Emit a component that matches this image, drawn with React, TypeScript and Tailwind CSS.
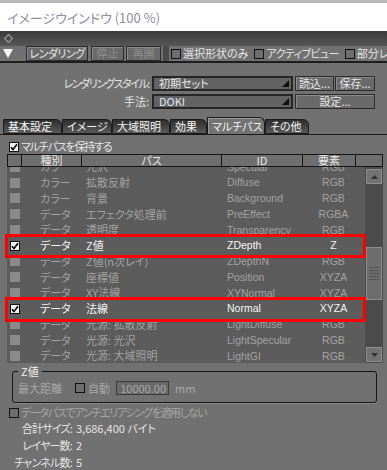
import React from 'react'

type Row = { kind: string; path: string; id: string; el: string; on?: boolean }

const rows: Row[] = [
  { kind: 'カラー', path: '光沢', id: 'Specular', el: 'RGB' },
  { kind: 'カラー', path: '拡散反射', id: 'Diffuse', el: 'RGB' },
  { kind: 'カラー', path: '背景', id: 'Background', el: 'RGB' },
  { kind: 'データ', path: 'エフェクタ処理前', id: 'PreEffect', el: 'RGBA' },
  { kind: 'データ', path: '透明度', id: 'Transparency', el: 'RGB' },
  { kind: 'データ', path: 'Z値', id: 'ZDepth', el: 'Z', on: true },
  { kind: 'データ', path: 'Z値(n次レイ)', id: 'ZDepthN', el: 'RGB' },
  { kind: 'データ', path: '座標値', id: 'Position', el: 'XYZA' },
  { kind: 'データ', path: 'XY法線', id: 'XYNormal', el: 'XYZA' },
  { kind: 'データ', path: '法線', id: 'Normal', el: 'XYZA', on: true },
  { kind: 'データ', path: '光源: 拡散反射', id: 'LightDiffuse', el: 'RGB' },
  { kind: 'データ', path: '光源: 光沢', id: 'LightSpecular', el: 'RGB' },
  { kind: 'データ', path: '光源: 大域照明', id: 'LightGI', el: 'RGB' },
]

const tabs = [
  { t: '基本設定', w: 'w-[59px]' },
  { t: 'イメージ', w: 'w-[50px]' },
  { t: '大域照明', w: 'w-[58px]' },
  { t: '効果', w: 'w-[37px]' },
  { t: 'マルチパス', w: 'w-[58px]', active: true },
  { t: 'その他', w: 'w-[44px]' },
]

const Check = ({ on = false }: { on?: boolean }) => (
  <span
    className={
      'flex items-center justify-center w-[10px] h-[10px] shrink-0 border border-[#111] ' +
      (on ? 'bg-[#f2f2f2]' : 'bg-[#6e6e6e]')
    }
  >
    {on && (
      <svg width="8" height="8" viewBox="0 0 8 8">
        <path d="M1 4.2 L3 6.5 L7 1.2" stroke="#000" strokeWidth="1.6" fill="none" />
      </svg>
    )}
  </span>
)

const Btn = ({ label, dim = false, className = '' }: { label: string; dim?: boolean; className?: string }) => (
  <div
    className={
      'flex items-center justify-center h-[15px] shrink-0 border border-[#2c2c2c] bg-[#6a6a6a] shadow-[inset_1px_1px_0_#8a8a8a] ' +
      (dim ? 'text-[#8e8e8e] ' : 'text-[#e6e6e6] ') +
      className
    }
  >
    {label}
  </div>
)

const Drop = ({ label, blue = false }: { label: string; blue?: boolean }) => (
  <div className="flex items-center w-[141px] h-[15px] border-2 border-[#262626] bg-[#636363] pl-[5px] pr-[2px]">
    <span className={'flex-1 leading-none ' + (blue ? 'text-[#dfe8f2]' : 'text-[#e6e6e6]')}>{label}</span>
    <svg width="7" height="7" viewBox="0 0 7 7">
      <polygon points="7,0 7,7 0,7" fill="#111" />
    </svg>
  </div>
)

export default function App() {
  return (
    <div className="w-[387px] h-[470px] overflow-hidden bg-[#717171] text-[11px] leading-none font-['Noto_Sans_CJK_JP',sans-serif] [font-feature-settings:'palt'] text-[#e4e4e4]">
      {/* title */}
      <div className="h-[31px] bg-white border-t-[3px] border-[#b8b8b8] flex items-center pl-[7px] text-[13px] text-[#8d8d9c]">
        イメージウインドウ (100 %)
      </div>
      <div className="h-[15px] bg-gradient-to-b from-[#3a3a3a] to-[#575757] flex items-center pl-[4px]">
        <svg width="9" height="9" viewBox="0 0 9 9">
          <polygon points="4.5,0.5 8.5,4.5 4.5,8.5 0.5,4.5" fill="none" stroke="#9a9a9a" strokeWidth="1.2" />
        </svg>
      </div>
      {/* toolbar */}
      <div className="h-[17px] flex items-center border-b-2 border-[#1e1e1e] whitespace-nowrap overflow-hidden">
        <svg className="ml-[3px] mr-[13px] shrink-0" width="10" height="9" viewBox="0 0 10 9">
          <polygon points="0,0 10,0 5,9" fill="#f4f4f4" />
        </svg>
        <Btn label="レンダリング" className="w-[62px] tracking-[-0.5px]" />
        <Btn label="停止" dim className="w-[33px] ml-[3px]" />
        <Btn label="再開" dim className="w-[35px] ml-[2px]" />
        <div className="w-[6px] h-[17px] bg-[#4a4a4a] ml-[2px] mr-[2px] shrink-0" />
        <Check />
        <span className="ml-[2px]">選択形状のみ</span>
        <span className="ml-[6px]"><Check /></span>
        <span className="ml-[2px] tracking-[-0.6px]">アクティブビュー</span>
        <span className="ml-[6px]"><Check /></span>
        <span className="ml-[2px]">部分レンダリング</span>
      </div>

      {/* style rows */}
      <div className="flex flex-col gap-[3px] mt-[13px]">
        <div className="flex items-center">
          <span className="w-[152px] text-right pr-[3px] tracking-[-1.4px]">レンダリングスタイル:</span>
          <Drop label="初期セット" />
          <Btn label="読込..." className="w-[39px] ml-[2px]" />
          <Btn label="保存..." className="w-[40px] ml-[1px]" />
        </div>
        <div className="flex items-center">
          <span className="w-[152px] text-right pr-[3px]">手法:</span>
          <Drop label="DOKI" blue />
          <Btn label="設定..." className="w-[80px] ml-[2px]" />
        </div>
      </div>

      {/* tabs */}
      <div className="flex items-end h-[17px] mt-[9px] pl-[3px] border-b border-[#1a1a1a]">
        {tabs.map(({ t, w, active }) => (
          <div
            key={t}
            className={
              'flex items-center shrink-0 pl-[4px] border border-[#1c1c1c] rounded-tr-[6px] ' +
              w +
              (active
                ? ' h-[17px] bg-[#737373] border-b-0 text-[#f2f2f2] shadow-[inset_1px_1px_0_#9a9a9a]'
                : ' h-[15px] bg-gradient-to-b from-[#2e2e2e] to-[#5a5a5a] text-[#f4f4f4]')
            }
          >
            {t}
          </div>
        ))}
      </div>

      <div className="flex items-center mt-[6px] pl-[9px] gap-[2px]">
        <Check on />
        <span className="tracking-[-1.2px]">マルチパスを保持する</span>
      </div>

      {/* table */}
      <div className="relative ml-[7px] mt-[2px] w-[376px]">
        <div className="flex h-[13px] bg-[#6f6f6f] border border-[#151515] text-[#e8e8e8]">
          <div className="w-[14px] border-r border-[#151515]" />
          <div className="w-[60px] border-r border-[#151515] text-center">種別</div>
          <div className="w-[140px] border-r border-[#151515] text-center">パス</div>
          <div className="w-[81px] border-r border-[#151515] text-center">ID</div>
          <div className="w-[53px] border-r border-[#151515] text-center">要素</div>
          <div className="flex-1" />
        </div>
        <div className="flex h-[196px]">
          <div className="w-[358px] bg-[#5c5c5c] overflow-hidden">
            <div className="mt-[-8px]">
              {rows.map((r) => (
                <div
                  key={r.id}
                  className={'flex items-center h-[15.75px] ' + (r.on ? 'text-[#f4f4f4]' : 'text-[#a2a2a2]')}
                >
                  <div className="w-[15px] pl-[3px]">
                    {r.on ? (
                      <Check on />
                    ) : (
                      <span className="block w-[10px] h-[10px] bg-[#8a8a8a]" />
                    )}
                  </div>
                  <div className="w-[63px] pl-[18px]">{r.kind}</div>
                  <div className="w-[141px] pl-[1px] whitespace-nowrap">{r.path}</div>
                  <div className="w-[81px] pl-[1px] text-[10.5px] font-['Liberation_Sans',sans-serif]">{r.id}</div>
                  <div className="w-[53px] text-center text-[10.5px] font-['Liberation_Sans',sans-serif]">{r.el}</div>
                </div>
              ))}
            </div>
          </div>
          <div className="w-[18px] bg-[#4b4b4b] flex flex-col items-center pt-[2px] pb-[1px]">
            <div className="w-[16px] h-[15px] bg-[#727272] border border-[#8e8e8e] flex items-center justify-center">
              <svg width="7" height="4" viewBox="0 0 7 4"><polygon points="3.5,0 7,4 0,4" fill="#333" /></svg>
            </div>
            <div className="flex-1 w-full flex flex-col pt-[63px]">
              <div className="w-[16px] mx-auto h-[53px] bg-[#6d6d6d] border border-[#8c8c8c] flex flex-col items-center justify-center gap-[2px]">
                {[0, 1, 2, 3, 4].map((i) => (
                  <div key={i} className="w-[10px] h-px bg-[#555]" />
                ))}
              </div>
            </div>
            <div className="w-[16px] h-[15px] bg-[#727272] border border-[#8e8e8e] flex items-center justify-center">
              <svg width="7" height="4" viewBox="0 0 7 4"><polygon points="0,0 7,0 3.5,4" fill="#333" /></svg>
            </div>
          </div>
        </div>
        {/* highlight annotations */}
        <div className="absolute left-[-2px] top-[80px] w-[361px] h-[24px] border-[3px] border-[#ff0000]" />
        <div className="absolute left-[-2px] top-[143px] w-[361px] h-[25px] border-[3px] border-[#ff0000]" />
      </div>

      {/* Z group */}
      <div className="relative ml-[12px] mt-[8px] w-[365px] h-[32px] border border-[#141414] rounded-[3px] shadow-[0_1px_0_#8a8a8a]">
        <span className="absolute left-[5px] top-[-6px] px-[3px] bg-[#717171] text-[#f0f0f0]">Z値</span>
        <div className="flex items-center h-full pl-[5px] pt-[2px] text-[#a8a8a8]">
          <span>最大距離</span>
          <span className="ml-[13px]"><Check /></span>
          <span className="ml-[3px]">自動</span>
          <div className="ml-[6px] w-[53px] h-[14px] border border-[#3c3c3c] bg-[#6a6a6a] pr-[2px] flex items-center justify-end">
            10000.00
          </div>
          <span className="ml-[6px]">mm</span>
        </div>
      </div>

      <div className="flex items-center gap-[2px] mt-[4px] pl-[9px] text-[#a4a4a4]">
        <Check />
        <span className="tracking-[-1.3px]">データパスでアンチエリアシングを適用しない</span>
      </div>

      <div className="flex flex-col mt-[2px]">
        {[
          ['合計サイズ:', '3,686,400 バイト'],
          ['レイヤー数:', '2'],
          ['チャンネル数:', '5'],
        ].map(([k, v]) => (
          <div key={k} className="flex items-center h-[17px]">
            <span className="w-[72px] text-right tracking-[-0.8px]">{k}</span>
            <span className="ml-[4px]">{v}</span>
          </div>
        ))}
      </div>
    </div>
  )
}
